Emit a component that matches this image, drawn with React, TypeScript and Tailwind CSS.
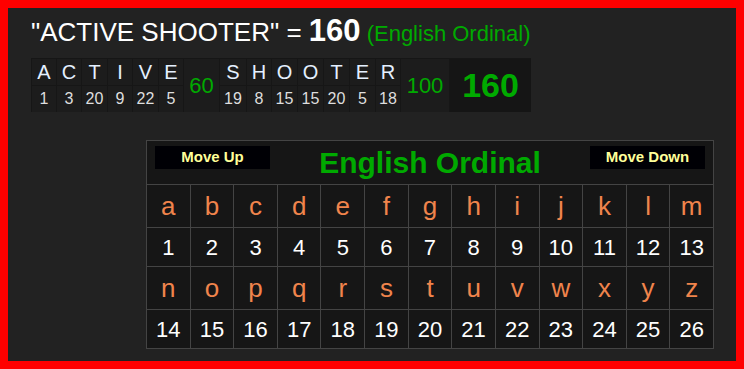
import React from 'react';

const activeWord = [
  { l: 'A', n: 1, w: 25 },
  { l: 'C', n: 3, w: 25 },
  { l: 'T', n: 20, w: 26 },
  { l: 'I', n: 9, w: 25 },
  { l: 'V', n: 22, w: 26 },
  { l: 'E', n: 5, w: 25 },
];

const shooterWord = [
  { l: 'S', n: 19, w: 27 },
  { l: 'H', n: 8, w: 25 },
  { l: 'O', n: 15, w: 26 },
  { l: 'O', n: 15, w: 26 },
  { l: 'T', n: 20, w: 26 },
  { l: 'E', n: 5, w: 26 },
  { l: 'R', n: 18, w: 25 },
];

const alphabet = 'abcdefghijklmnopqrstuvwxyz'.split('');

const LetterCol = ({ l, n, w }: { l: string; n: number; w: number }) => (
  <div className="flex flex-col" style={{ width: w }}>
    <div className="h-[27px] flex items-center justify-center border-r border-b border-[#161616] text-[20px] text-[#e4f0ff]">{l}</div>
    <div className="h-[26px] flex items-center justify-center border-r border-[#161616] text-[16px] text-[#dedede]">{n}</div>
  </div>
);

const App: React.FC = () => {
  const rows = [alphabet.slice(0, 13), alphabet.slice(13)];

  return (
    <div className="w-[744px] h-[369px] border-8 border-[#ff0000] bg-[#222222] font-['Liberation_Sans',Arial,sans-serif] overflow-hidden">
      <div className="pl-[23px] pt-[8px] flex items-baseline whitespace-pre">
        <span className="text-[26px] text-white leading-[30px]">"ACTIVE SHOOTER" = </span>
        <span className="text-[31px] font-bold text-white leading-[30px]">160</span>
        <span className="text-[22px] text-[#00aa00] leading-[30px]"> (English Ordinal)</span>
      </div>

      <div className="ml-[23px] mt-[9px] flex w-fit border-t border-l border-[#161616] bg-[#1c1c1c]">
        {activeWord.map((c, i) => <LetterCol key={'a' + i} {...c} />)}
        <div className="w-[36px] flex items-center justify-center border-r border-[#161616] text-[22px] text-[#00aa00]">60</div>
        {shooterWord.map((c, i) => <LetterCol key={'s' + i} {...c} />)}
        <div className="w-[49px] flex items-center justify-center border-r border-[#161616] text-[22px] text-[#00aa00]">100</div>
        <div className="w-[81px] h-[53px] flex items-center justify-center bg-[#151515] text-[34px] font-bold text-[#00aa00]">160</div>
      </div>

      <div className="flex justify-end pr-[22px] mt-[28px]">
        <div className="w-[568px] border-t border-l border-[#444444] bg-[#161616]">
          <div className="h-[44px] flex items-start justify-between px-[8px] pt-[5px] border-r border-b border-[#444444]">
            <button className="w-[115px] h-[23px] bg-[#000005] text-[#ffff99] text-[15px] font-bold flex items-center justify-center">Move Up</button>
            <div className="text-[30px] font-bold text-[#00aa00] leading-[34px]">English Ordinal</div>
            <button className="w-[115px] h-[23px] bg-[#000005] text-[#ffff99] text-[15px] font-bold flex items-center justify-center">Move Down</button>
          </div>
          {rows.map((row, ri) => (
            <React.Fragment key={ri}>
              <div className="grid grid-cols-13">
                {row.map((ch) => (
                  <div key={ch} className="h-[43px] flex items-center justify-center border-r border-b border-[#444444] text-[26px] text-[#f0844c]">{ch}</div>
                ))}
              </div>
              <div className="grid grid-cols-13">
                {row.map((ch) => (
                  <div key={ch + 'n'} className="h-[39px] flex items-center justify-center border-r border-b border-[#444444] text-[22px] text-white">{alphabet.indexOf(ch) + 1}</div>
                ))}
              </div>
            </React.Fragment>
          ))}
        </div>
      </div>
    </div>
  );
};

export default App;
